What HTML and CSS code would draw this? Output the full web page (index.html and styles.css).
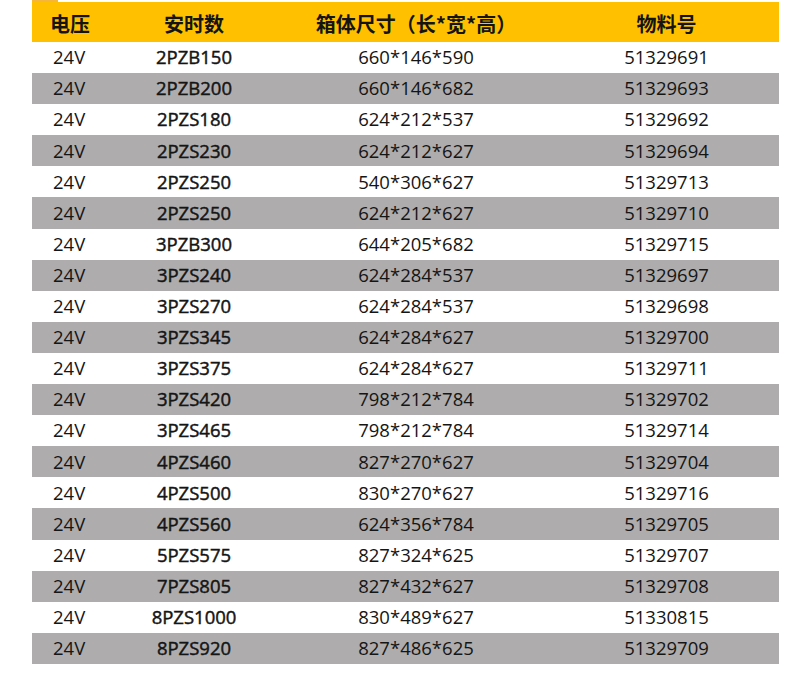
FILE: index.html
```html
<!DOCTYPE html>
<html lang="zh">
<head>
<meta charset="utf-8">
<link rel="stylesheet" href="styles.css">
</head>
<body>
<div class="page">
  <div class="tab"></div>
  <table class="spec">
    <thead>
      <tr>
        <th class="c1">电压</th>
        <th class="c2">安时数</th>
        <th class="c3">箱体尺寸（长*宽*高）</th>
        <th class="c4">物料号</th>
      </tr>
    </thead>
    <tbody>
      <tr><td class="c1">24V</td><td class="c2">2PZB150</td><td class="c3">660*146*590</td><td class="c4">51329691</td></tr>
      <tr><td class="c1">24V</td><td class="c2">2PZB200</td><td class="c3">660*146*682</td><td class="c4">51329693</td></tr>
      <tr><td class="c1">24V</td><td class="c2">2PZS180</td><td class="c3">624*212*537</td><td class="c4">51329692</td></tr>
      <tr><td class="c1">24V</td><td class="c2">2PZS230</td><td class="c3">624*212*627</td><td class="c4">51329694</td></tr>
      <tr><td class="c1">24V</td><td class="c2">2PZS250</td><td class="c3">540*306*627</td><td class="c4">51329713</td></tr>
      <tr><td class="c1">24V</td><td class="c2">2PZS250</td><td class="c3">624*212*627</td><td class="c4">51329710</td></tr>
      <tr><td class="c1">24V</td><td class="c2">3PZB300</td><td class="c3">644*205*682</td><td class="c4">51329715</td></tr>
      <tr><td class="c1">24V</td><td class="c2">3PZS240</td><td class="c3">624*284*537</td><td class="c4">51329697</td></tr>
      <tr><td class="c1">24V</td><td class="c2">3PZS270</td><td class="c3">624*284*537</td><td class="c4">51329698</td></tr>
      <tr><td class="c1">24V</td><td class="c2">3PZS345</td><td class="c3">624*284*627</td><td class="c4">51329700</td></tr>
      <tr><td class="c1">24V</td><td class="c2">3PZS375</td><td class="c3">624*284*627</td><td class="c4">51329711</td></tr>
      <tr><td class="c1">24V</td><td class="c2">3PZS420</td><td class="c3">798*212*784</td><td class="c4">51329702</td></tr>
      <tr><td class="c1">24V</td><td class="c2">3PZS465</td><td class="c3">798*212*784</td><td class="c4">51329714</td></tr>
      <tr><td class="c1">24V</td><td class="c2">4PZS460</td><td class="c3">827*270*627</td><td class="c4">51329704</td></tr>
      <tr><td class="c1">24V</td><td class="c2">4PZS500</td><td class="c3">830*270*627</td><td class="c4">51329716</td></tr>
      <tr><td class="c1">24V</td><td class="c2">4PZS560</td><td class="c3">624*356*784</td><td class="c4">51329705</td></tr>
      <tr><td class="c1">24V</td><td class="c2">5PZS575</td><td class="c3">827*324*625</td><td class="c4">51329707</td></tr>
      <tr><td class="c1">24V</td><td class="c2">7PZS805</td><td class="c3">827*432*627</td><td class="c4">51329708</td></tr>
      <tr><td class="c1">24V</td><td class="c2">8PZS1000</td><td class="c3">830*489*627</td><td class="c4">51330815</td></tr>
      <tr><td class="c1">24V</td><td class="c2">8PZS920</td><td class="c3">827*486*625</td><td class="c4">51329709</td></tr>
    </tbody>
  </table>
</div>
</body>
</html>
```
FILE: styles.css
```css
html, body {
  margin: 0;
  padding: 0;
  background: #ffffff;
}

.page {
  padding: 0 8px 0 32px;
  font-family: "Open Sans", "Noto Sans CJK SC", sans-serif;
  color: #151515;
}

.tab {
  width: 26px;
  height: 2px;
  background: #f4b63c;
}

.spec {
  width: 747px;
  border-collapse: collapse;
  table-layout: fixed;
}

.spec th {
  height: 40px;
  padding: 3px 0 0;
  box-sizing: border-box;
  background: #ffc000;
  font-family: "Noto Sans CJK SC", sans-serif;
  font-size: 20px;
  font-weight: 700;
  line-height: 1;
  color: #141414;
  text-align: center;
  vertical-align: middle;
}

.spec td {
  height: 31.1px;
  padding: 0;
  box-sizing: border-box;
  font-size: 18.5px;
  line-height: 1;
  text-align: center;
  vertical-align: middle;
}

.spec tbody tr:nth-child(even) td {
  background: #aeacac;
}

.spec .c1 {
  width: 78px;
  text-align: left;
  padding-left: 21px;
}

.spec th.c1 {
  padding-left: 18px;
}

.spec .c2 {
  width: 168px;
}

.spec td.c2 {
  font-weight: 400;
  -webkit-text-stroke: 0.45px #151515;
}

.spec .c3 {
  width: 276px;
}

.spec .c4 {
  width: 225px;
}
```
